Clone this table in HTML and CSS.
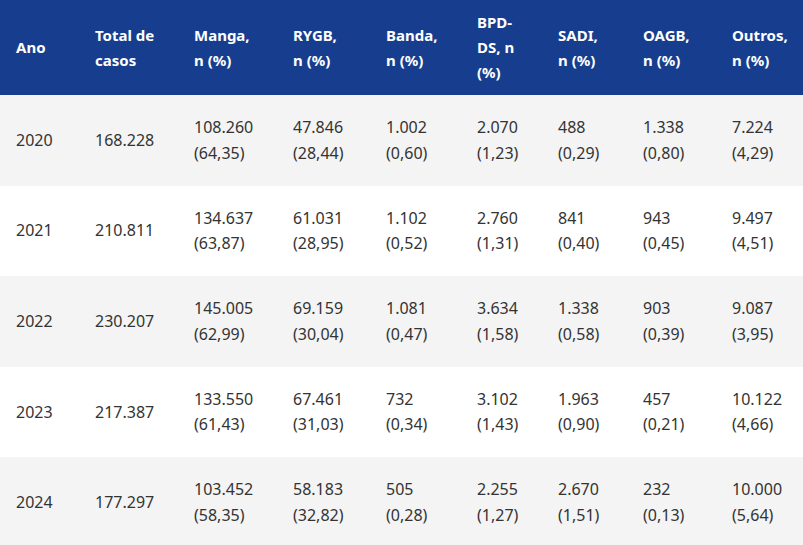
FILE: index.html
```html
<!DOCTYPE html>
<html lang="pt">
<head>
<meta charset="utf-8">
<link rel="stylesheet" href="styles.css">
</head>
<body>
<table class="data">
  <colgroup>
    <col class="c-ano"><col class="c-total"><col class="c-manga"><col class="c-rygb"><col class="c-banda"><col class="c-bpd"><col class="c-sadi"><col class="c-oagb"><col class="c-outros">
  </colgroup>
  <thead>
    <tr>
      <th>Ano</th>
      <th>Total de casos</th>
      <th>Manga, n (%)</th>
      <th>RYGB, n (%)</th>
      <th>Banda, n (%)</th>
      <th>BPD-DS, n (%)</th>
      <th>SADI, n (%)</th>
      <th>OAGB, n (%)</th>
      <th>Outros, n (%)</th>
    </tr>
  </thead>
  <tbody>
    <tr>
      <td>2020</td><td>168.228</td>
      <td>108.260<br>(64,35)</td><td>47.846<br>(28,44)</td><td>1.002<br>(0,60)</td><td>2.070<br>(1,23)</td><td>488<br>(0,29)</td><td>1.338<br>(0,80)</td><td>7.224<br>(4,29)</td>
    </tr>
    <tr>
      <td>2021</td><td>210.811</td>
      <td>134.637<br>(63,87)</td><td>61.031<br>(28,95)</td><td>1.102<br>(0,52)</td><td>2.760<br>(1,31)</td><td>841<br>(0,40)</td><td>943<br>(0,45)</td><td>9.497<br>(4,51)</td>
    </tr>
    <tr>
      <td>2022</td><td>230.207</td>
      <td>145.005<br>(62,99)</td><td>69.159<br>(30,04)</td><td>1.081<br>(0,47)</td><td>3.634<br>(1,58)</td><td>1.338<br>(0,58)</td><td>903<br>(0,39)</td><td>9.087<br>(3,95)</td>
    </tr>
    <tr>
      <td>2023</td><td>217.387</td>
      <td>133.550<br>(61,43)</td><td>67.461<br>(31,03)</td><td>732<br>(0,34)</td><td>3.102<br>(1,43)</td><td>1.963<br>(0,90)</td><td>457<br>(0,21)</td><td>10.122<br>(4,66)</td>
    </tr>
    <tr>
      <td>2024</td><td>177.297</td>
      <td>103.452<br>(58,35)</td><td>58.183<br>(32,82)</td><td>505<br>(0,28)</td><td>2.255<br>(1,27)</td><td>2.670<br>(1,51)</td><td>232<br>(0,13)</td><td>10.000<br>(5,64)</td>
    </tr>
  </tbody>
</table>
</body>
</html>
```
FILE: styles.css
```css
html, body {
  margin: 0;
  padding: 0;
  background: #ffffff;
}
body {
  font-family: "Noto Sans", "Liberation Sans", sans-serif;
  color: #333333;
}
.data {
  width: 803px;
  border-collapse: collapse;
  table-layout: fixed;
}
.c-ano { width: 79px; }
.c-total { width: 99px; }
.c-manga { width: 99px; }
.c-rygb { width: 93px; }
.c-banda { width: 91px; }
.c-bpd { width: 81px; }
.c-sadi { width: 85px; }
.c-oagb { width: 89px; }
.c-outros { width: 87px; }
.data th {
  background: #173e8e;
  color: #ffffff;
  font-weight: 700;
  font-size: 15px;
  line-height: 25px;
  text-align: left;
  vertical-align: middle;
  padding: 10px 20px 10px 16px;
  height: 75px;
}
.data td {
  font-size: 16px;
  line-height: 25.6px;
  text-align: left;
  vertical-align: middle;
  padding: 20px 8px 19.4px 16px;
  height: 51.2px;
}
.data tbody tr:nth-child(odd) td {
  background: #f4f4f4;
}
.data tbody tr:nth-child(even) td {
  background: #ffffff;
}
```
